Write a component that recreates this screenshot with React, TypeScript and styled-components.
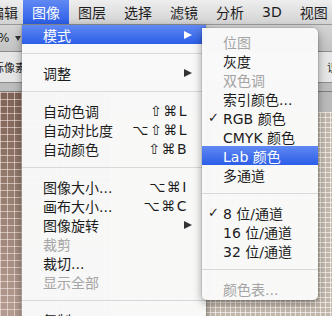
import styled, { createGlobalStyle } from 'styled-components'

const GlobalStyle = createGlobalStyle`
  html, body {
    margin: 0;
    padding: 0;
    background: #c6c6c6;
  }
  body {
    font-family: "DejaVu Sans", "Noto Sans CJK SC", sans-serif;
  }
`

const HL = 'linear-gradient(to bottom, #6089f3, #2c5ee8)'

const Screen = styled.div`
  position: relative;
  width: 332px;
  height: 316px;
  overflow: hidden;
  display: flex;
  flex-direction: column;
  background: #c6c6c6;
`

const MenuBar = styled.div`
  height: 25px;
  flex: none;
  display: flex;
  align-items: stretch;
  box-sizing: border-box;
  background: linear-gradient(to bottom, #eeeeee, #d2d2d2);
  border-bottom: 1px solid #9a9a9a;
  font-size: 14px;
  color: #1e1e1e;
  white-space: nowrap;
`

const MenuTitle = styled.div<{ $active?: boolean; $lead?: boolean }>`
  display: flex;
  align-items: center;
  padding: ${p => (p.$lead ? '0 5px 0 0' : '0 9px')};
  margin-left: ${p => (p.$lead ? '-10px' : '0')};
  color: ${p => (p.$active ? '#fff' : '#1e1e1e')};
  background: ${p => (p.$active ? HL : 'none')};
`

const OptionsBar = styled.div`
  height: 27px;
  flex: none;
  display: flex;
  align-items: center;
  gap: 6px;
  box-sizing: border-box;
  background: linear-gradient(to bottom, #d4d4d4, #c3c3c3);
  border-bottom: 1px solid #8c8c8c;
  font-size: 12px;
  color: #222;
`

const Caret = styled.span`
  width: 0;
  height: 0;
  border-top: 5px solid #333;
  border-left: 3px solid transparent;
  border-right: 3px solid transparent;
`

const DocBar = styled.div`
  height: 31px;
  flex: none;
  display: flex;
  align-items: center;
  justify-content: space-between;
  box-sizing: border-box;
  background: #e6e6e6;
  border-bottom: 1px solid #8c8c8c;
  font-size: 11px;
  color: #1e1e1e;
  white-space: nowrap;
`

const Clip = styled.span<{ $shift: number }>`
  margin: 0 ${p => (p.$shift < 0 ? 0 : -p.$shift)}px 0 ${p => (p.$shift < 0 ? p.$shift : 0)}px;
`

const RulerBand = styled.div`
  height: 8px;
  flex: none;
  background: #bdbdbd;
  border-bottom: 1px solid #7e7e7e;
`

const Canvas = styled.div`
  flex: 1;
  display: flex;
`

const BrownPane = styled.div`
  width: 110px;
  background-color: #8d7467;
  background-image:
    linear-gradient(to right, rgba(255, 240, 235, 0.55) 1px, transparent 1px),
    linear-gradient(to bottom, rgba(255, 240, 235, 0.55) 1px, transparent 1px),
    linear-gradient(to bottom, #7f6356, #957d70 45%, #b49c92);
  background-size: 7px 7px, 7px 7px, 100% 100%;
`

const RightPane = styled.div`
  flex: 1;
  display: flex;
  flex-direction: column;
`

const Gutter = styled.div`
  height: 20px;
  flex: none;
  background: #bababa;
`

const BeigeTiles = styled.div`
  flex: 1;
  background-color: #c2b6aa;
  background-image:
    linear-gradient(to right, rgba(255, 255, 255, 0.6) 1px, transparent 1px),
    linear-gradient(to bottom, rgba(255, 255, 255, 0.6) 1px, transparent 1px);
  background-size: 5px 5px, 5px 5px;
`

const Menu = styled.div<{ $left: number; $top: number; $width: number; $sub?: boolean }>`
  position: absolute;
  left: ${p => p.$left}px;
  top: ${p => p.$top}px;
  width: ${p => p.$width}px;
  padding: ${p => (p.$sub ? '4px 0 2px' : '0 0 8px')};
  background: rgba(249, 249, 249, 0.98);
  border-radius: ${p => (p.$sub ? '0 5px 5px 5px' : '0 0 5px 5px')};
  box-shadow: 0 3px 10px rgba(0, 0, 0, 0.38), 0 0 0 1px rgba(0, 0, 0, 0.08);
  font-size: 14px;
  white-space: nowrap;
`

const Item = styled.div<{ $hl?: boolean; $off?: boolean }>`
  height: 19px;
  display: flex;
  align-items: center;
  padding: 0 14px 0 6px;
  color: ${p => (p.$hl ? '#fff' : p.$off ? '#a4a4a4' : '#1c1c1c')};
  background: ${p => (p.$hl ? HL : 'none')};
`

const Check = styled.span`
  width: 15px;
  flex: none;
  font-size: 13px;
  font-weight: bold;
`

const Label = styled.span`
  flex: 1;
`

const Keys = styled.span`
  padding-right: 4px;
  font-size: 14px;
  letter-spacing: 1.5px;
`

const Arrow = styled.span<{ $hl?: boolean }>`
  width: 0;
  height: 0;
  border-left: 8px solid ${p => (p.$hl ? '#fff' : '#333')};
  border-top: 4.5px solid transparent;
  border-bottom: 4.5px solid transparent;
`

const Separator = styled.div`
  height: 1px;
  margin: 9px 0;
  background: #d9d9d9;
`

type Row = { label: string; keys?: string; sub?: boolean; off?: boolean; hl?: boolean; check?: boolean } | 'sep'

const imageMenu: Row[] = [
  { label: '模式', sub: true, hl: true },
  'sep',
  { label: '调整', sub: true },
  'sep',
  { label: '自动色调', keys: '⇧⌘L' },
  { label: '自动对比度', keys: '⌥⇧⌘L' },
  { label: '自动颜色', keys: '⇧⌘B' },
  'sep',
  { label: '图像大小...', keys: '⌥⌘I' },
  { label: '画布大小...', keys: '⌥⌘C' },
  { label: '图像旋转', sub: true },
  { label: '裁剪', off: true },
  { label: '裁切...' },
  { label: '显示全部', off: true },
  'sep',
  { label: '复制' },
]

const modeMenu: Row[] = [
  { label: '位图', off: true },
  { label: '灰度' },
  { label: '双色调', off: true },
  { label: '索引颜色...' },
  { label: 'RGB 颜色', check: true },
  { label: 'CMYK 颜色' },
  { label: 'Lab 颜色', hl: true },
  { label: '多通道' },
  'sep',
  { label: '8 位/通道', check: true },
  { label: '16 位/通道' },
  { label: '32 位/通道' },
  'sep',
  { label: '颜色表...', off: true },
]

const titles = ['图像', '图层', '选择', '滤镜', '分析', '3D', '视图']

function MenuRows({ rows }: { rows: Row[] }) {
  return <>
    {rows.map((r, i) => {
      if (r === 'sep') return <Separator key={i} />
      return <Item key={i} $hl={r.hl} $off={r.off}>
        <Check>{r.check ? '✓' : ''}</Check>
        <Label>{r.label}</Label>
        {r.keys && <Keys>{r.keys}</Keys>}
        {r.sub && <Arrow $hl={r.hl} />}
      </Item>
    })}
  </>
}

export default function App() {
  return <>
    <GlobalStyle />
    <Screen>
      <MenuBar>
        <MenuTitle $lead>编辑</MenuTitle>
        {titles.map(t => <MenuTitle key={t} $active={t === '图像'}>{t}</MenuTitle>)}
      </MenuBar>
      <OptionsBar>
        <Clip $shift={-2}>%</Clip>
        <Caret />
      </OptionsBar>
      <DocBar>
        <Clip $shift={-18}>坐标像素</Clip>
        <Clip $shift={6}>识</Clip>
      </DocBar>
      <RulerBand />
      <Canvas>
        <BrownPane />
        <RightPane>
          <Gutter />
          <BeigeTiles />
        </RightPane>
      </Canvas>

      <Menu $left={22} $top={25} $width={184}>
        <MenuRows rows={imageMenu} />
      </Menu>
      <Menu $left={202} $top={28} $width={116} $sub>
        <MenuRows rows={modeMenu} />
      </Menu>
    </Screen>
  </>
}
